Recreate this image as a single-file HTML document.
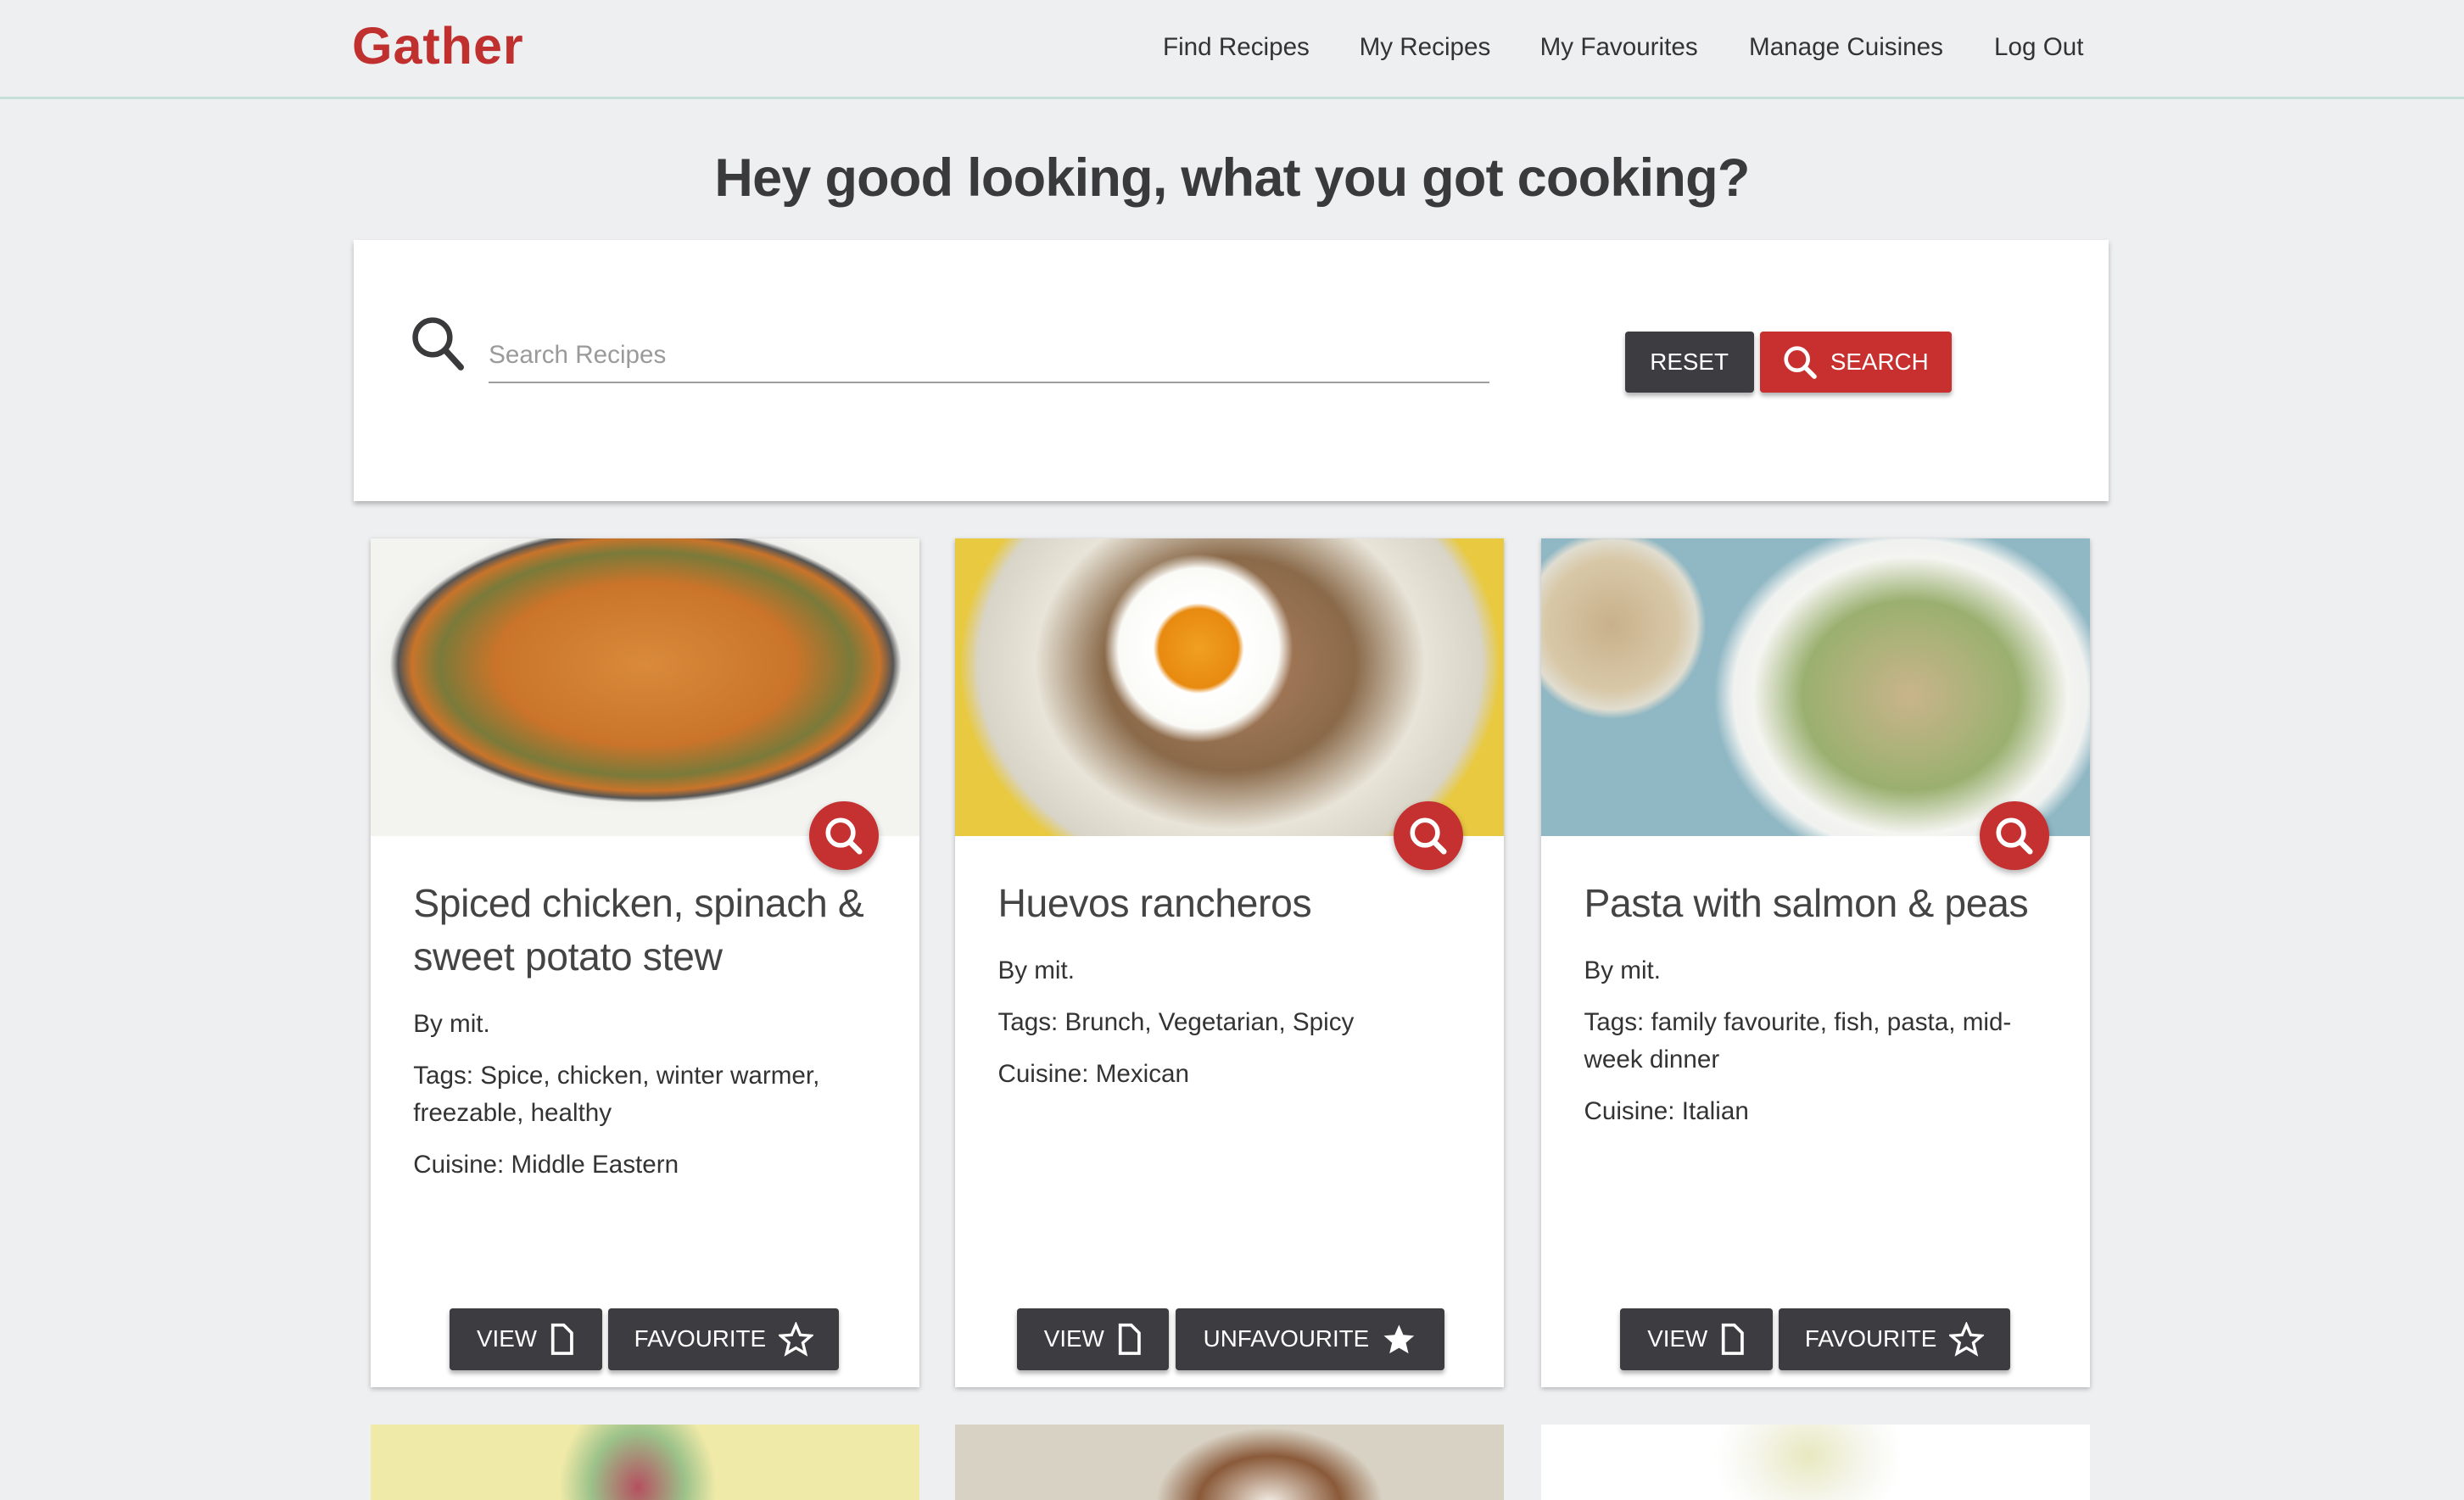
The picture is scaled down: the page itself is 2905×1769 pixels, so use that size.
<!DOCTYPE html>
<html><head><meta charset="utf-8"><style>
*{box-sizing:border-box;margin:0;padding:0}
html,body{width:2905px;height:1769px;overflow:hidden;background:#eeeff1}
#root{zoom:1.85268;width:1568px;height:955px;position:relative;font-family:"Liberation Sans",sans-serif;color:#333;overflow:hidden}
.nav{position:absolute;left:0;top:0;width:1568px;height:63px;border-bottom:2px solid #c5e0d9}
.logo{position:absolute;left:224px;top:10px;font-size:33px;font-weight:bold;color:#c0302f;letter-spacing:0.5px}
.links a{position:absolute;top:21px;font-size:16px;color:#333;text-decoration:none}
h1{position:absolute;left:0;width:1568px;top:94px;text-align:center;font-size:34px;font-weight:bold;color:#3a3a3d;letter-spacing:-0.4px}
.search{position:absolute;left:225px;top:153px;width:1117px;height:166px;background:#fff;box-shadow:0 2px 3px rgba(0,0,0,.25)}
.inp{position:absolute;left:86px;top:58px;width:637px;height:33px;border-bottom:1.5px solid #9e9e9e;font-size:16px;color:#9a9a9a}
.btn{position:absolute;height:39px;color:#fff;font-size:15px;display:flex;align-items:center;justify-content:center;gap:8px;border-radius:2px;box-shadow:0 2px 3px rgba(0,0,0,.3)}
.dark{background:#3d3c40}.red{background:#c8302f}
.card{position:absolute;top:343px;width:349px;height:540px;background:#fff;box-shadow:0 1px 3px rgba(0,0,0,.25)}
.img{position:absolute;left:0;top:0;width:349px;height:189px;overflow:hidden}
.fab{position:absolute;left:279px;top:167px;width:44px;height:44px;border-radius:50%;background:#c53130;box-shadow:0 2px 4px rgba(0,0,0,.3)}
.body{position:absolute;left:27px;top:215px;right:20px}
.t{font-size:25px;line-height:34px;color:#444;letter-spacing:-.2px}
.p{font-size:16px;line-height:24px;margin-top:9px;color:#333}
.card .btn{top:490px}
.row2{position:absolute;top:907px;width:349px;height:60px;overflow:hidden}
</style></head><body><div id="root">
<div class="nav"><div class="logo">Gather</div>
<div class="links"><a style="left:740px">Find Recipes</a><a style="left:865px">My Recipes</a><a style="left:980px">My Favourites</a><a style="left:1113px">Manage Cuisines</a><a style="left:1269px">Log Out</a></div></div>
<h1>Hey good looking, what you got cooking?</h1>
<div class="search">
<svg style="position:absolute;left:36px;top:48px" width="36" height="36" viewBox="0 0 36 36"><circle cx="14" cy="14" r="11" fill="none" stroke="#3a3a3d" stroke-width="3.5"/><path d="M22 22 L32 33" stroke="#3a3a3d" stroke-width="4" stroke-linecap="round"/></svg>
<div class="inp"><span style="position:absolute;top:6px">Search Recipes</span></div>
<div class="btn dark" style="left:809px;top:58px;width:82px">RESET</div>
<div class="btn red" style="left:895px;top:58px;width:122px"><svg width="22" height="22" viewBox="0 0 22 22"><circle cx="9" cy="9" r="7" fill="none" stroke="#fff" stroke-width="2.5"/><path d="M14 14 L20 20" stroke="#fff" stroke-width="3" stroke-linecap="round"/></svg>SEARCH</div>
</div>

<div class="card" style="left:236px">
<div class="img" style="background:radial-gradient(ellipse 175px 95px at 175px 80px,#d98a3a 0%,#c9742a 55%,#7a7a3a 75%,#c9742a 85%,#555 90%,#eeeeea 93%,#f3f3f0 100%)"></div>
<div class="fab"><svg width="44" height="44" viewBox="0 0 44 44"><circle cx="20" cy="20" r="8" fill="none" stroke="#fff" stroke-width="3"/><path d="M26 26 L32 32" stroke="#fff" stroke-width="3.5" stroke-linecap="round"/></svg></div>
<div class="body"><div class="t">Spiced chicken, spinach &amp; sweet potato stew</div><div class="p" style="margin-top:14px">By mit.</div><div class="p">Tags: Spice, chicken, winter warmer, freezable, healthy</div><div class="p">Cuisine: Middle Eastern</div></div>
<div class="btn dark" style="left:50px;width:97px">VIEW <svg width="16" height="22" viewBox="0 0 16 22"><path d="M2 2h7l5 5v13H2z" fill="none" stroke="#fff" stroke-width="2"/></svg></div>
<div class="btn dark" style="left:151px;width:147px">FAVOURITE <svg width="22" height="22" viewBox="0 0 24 24"><path d="M12 2l3 7 7.5.6-5.7 4.9 1.8 7.4L12 18l-6.6 3.9 1.8-7.4L1.5 9.6 9 9z" fill="none" stroke="#fff" stroke-width="2"/></svg></div>
</div>

<div class="card" style="left:608px">
<div class="img" style="background:radial-gradient(circle 60px at 155px 70px,#f0a020 0%,#e88a10 42%,#fff 48%,#fafaf6 85%,rgba(255,255,255,0) 100%),radial-gradient(ellipse 200px 170px at 175px 80px,#b08060 0%,#8a6a4a 40%,#e8e4d8 62%,#d8d4c8 80%,#e8c940 86%)"></div>
<div class="fab"><svg width="44" height="44" viewBox="0 0 44 44"><circle cx="20" cy="20" r="8" fill="none" stroke="#fff" stroke-width="3"/><path d="M26 26 L32 32" stroke="#fff" stroke-width="3.5" stroke-linecap="round"/></svg></div>
<div class="body"><div class="t">Huevos rancheros</div><div class="p" style="margin-top:14px">By mit.</div><div class="p">Tags: Brunch, Vegetarian, Spicy</div><div class="p">Cuisine: Mexican</div></div>
<div class="btn dark" style="left:39px;width:97px">VIEW <svg width="16" height="22" viewBox="0 0 16 22"><path d="M2 2h7l5 5v13H2z" fill="none" stroke="#fff" stroke-width="2"/></svg></div>
<div class="btn dark" style="left:140px;width:171px">UNFAVOURITE <svg width="22" height="22" viewBox="0 0 24 24"><path d="M12 2l3 7 7.5.6-5.7 4.9 1.8 7.4L12 18l-6.6 3.9 1.8-7.4L1.5 9.6 9 9z" fill="#fff"/></svg></div>
</div>

<div class="card" style="left:981px">
<div class="img" style="background:radial-gradient(circle 60px at 45px 55px,#c8b08a 0%,#d8c8a8 70%,#e0ddd0 90%,rgba(255,255,255,0) 100%),radial-gradient(ellipse 125px 110px at 235px 100px,#c9b48a 0%,#9ab070 55%,#f4f4f0 80%,#f0f2f0 90%,#8fb7c4 100%)"></div>
<div class="fab"><svg width="44" height="44" viewBox="0 0 44 44"><circle cx="20" cy="20" r="8" fill="none" stroke="#fff" stroke-width="3"/><path d="M26 26 L32 32" stroke="#fff" stroke-width="3.5" stroke-linecap="round"/></svg></div>
<div class="body"><div class="t">Pasta with salmon &amp; peas</div><div class="p" style="margin-top:14px">By mit.</div><div class="p">Tags: family favourite, fish, pasta, mid-week dinner</div><div class="p">Cuisine: Italian</div></div>
<div class="btn dark" style="left:50px;width:97px">VIEW <svg width="16" height="22" viewBox="0 0 16 22"><path d="M2 2h7l5 5v13H2z" fill="none" stroke="#fff" stroke-width="2"/></svg></div>
<div class="btn dark" style="left:151px;width:147px">FAVOURITE <svg width="22" height="22" viewBox="0 0 24 24"><path d="M12 2l3 7 7.5.6-5.7 4.9 1.8 7.4L12 18l-6.6 3.9 1.8-7.4L1.5 9.6 9 9z" fill="none" stroke="#fff" stroke-width="2"/></svg></div>
</div>

<div class="row2" style="left:236px;background:radial-gradient(ellipse 50px 60px at 170px 40px,#b55060 0%,#9cc28a 60%,#f0eaa8 100%)"></div>
<div class="row2" style="left:608px;background:radial-gradient(ellipse 90px 60px at 200px 50px,#f4efe6 0%,#8a5a3a 50%,#d8d2c4 80%),#d6d0c2"></div>
<div class="row2" style="left:981px;background:radial-gradient(ellipse 60px 50px at 170px 20px,#e8e8c0 0%,#f6f6ee 60%,#fff 100%)"></div>
</div></body></html>
